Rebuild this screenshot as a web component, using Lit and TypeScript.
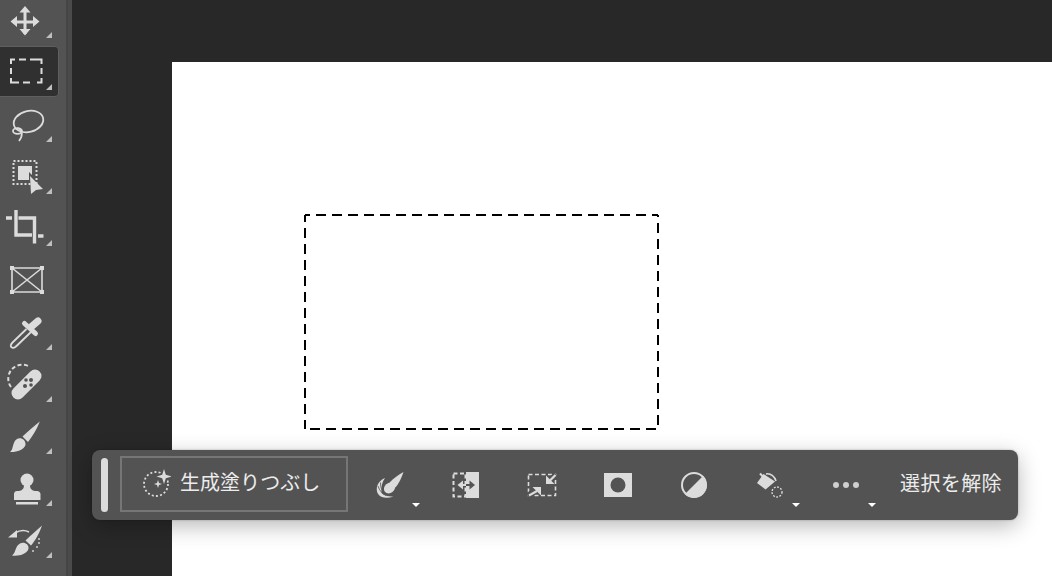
import { LitElement, html, css, svg } from "lit";
import { customElement } from "lit/decorators.js";
import { classMap } from "lit/directives/class-map.js";

const INK = "#dcdcdc";
const BAR = "#535353";

// Tool icons are drawn in page coordinates, the viewBox picks the slot
const TOOLS = [
  {
    corner: true,
    icon: svg`<path d="M25 10V34M13 22H37" stroke=${INK} stroke-width="3" fill="none"/>
      <path d="M25 6L30.500 12.500H19.500ZM25 35.500L30.500 29H19.500ZM10.500 21.500L17 16V27ZM39.500 21.500L33 16V27Z" fill=${INK}/>`,
  },
  {
    corner: true,
    selected: true,
    icon: svg`<path d="M15 59.500H11V64M19 59.500H26M30 59.500H37M41.500 64V59.500H37M41.500 68V74M41.500 78V82.500H37M30 82.500H23M19 82.500H11V78M11 74V68" stroke=${INK} stroke-width="2" fill="none"/>`,
  },
  {
    corner: true,
    icon: svg`<g fill="none" stroke=${INK} stroke-width="1.800">
      <ellipse cx="28.500" cy="121.500" rx="15" ry="10.500" transform="rotate(-14 28.500 121.500)"/>
      <ellipse cx="17.500" cy="131" rx="4.500" ry="2.800"/>
      <path d="M17 128C23 130 23 136 19 141"/></g>`,
  },
  {
    corner: true,
    icon: svg`<rect x="13.500" y="161" width="23" height="23" fill="none" stroke=${INK} stroke-width="2" stroke-dasharray="2 2"/>
      <path d="M18 166H32V175L29 172V180H18Z" fill=${INK}/>
      <path d="M30 176L43 189L36 190L31 194Z" fill=${INK}/>`,
  },
  {
    corner: true,
    icon: svg`<path d="M6 218H12M16 210V235H32M18.500 218H34.500V243.500M38 236H43.500" fill="none" stroke=${INK} stroke-width="3.400"/>`,
  },
  {
    corner: false,
    icon: svg`<path d="M12 268H42V292H12ZM12 268L42 292M42 268L12 292" fill="none" stroke=${INK} stroke-width="1.600"/>
      <path d="M10 266h4v4h-4zM40 266h4v4h-4zM10 290h4v4h-4zM40 290h4v4h-4z" fill=${INK}/>`,
  },
  {
    corner: true,
    icon: svg`<path d="M26.500 329L12.500 342.500C10 345 10.500 347 12 347.500C13.500 348.500 15 347.500 16.500 346L31 332" fill="none" stroke=${INK} stroke-width="1.800"/>
      <path d="M24.500 323.500L35.500 333.500" stroke=${INK} stroke-width="5" stroke-linecap="round"/>
      <path d="M31 327L38 321" stroke=${INK} stroke-width="7" stroke-linecap="round"/>`,
  },
  {
    corner: true,
    icon: svg`<path d="M11 387A14 14 0 0 1 30 367" fill="none" stroke=${INK} stroke-width="2" stroke-dasharray="4 2.500"/>
      <path d="M18 393L35 376" stroke=${INK} stroke-width="13" stroke-linecap="round"/>
      <g fill=${BAR}><circle cx="31" cy="380" r="2"/><circle cx="26" cy="380" r="1.800"/><circle cx="31" cy="385" r="1.800"/><circle cx="25" cy="386" r="2"/></g>`,
  },
  {
    corner: true,
    icon: svg`<path d="M39.800 421.500C37 429 32 437 28 442L22.500 436.500C28 431 35 425.500 39.800 421.500Z" fill=${INK}/>
      <path d="M10 452C14 449 12 442 17 439C21 437 26 440 25.500 445C24 450 16 452.500 10 452Z" fill=${INK}/>`,
  },
  {
    corner: true,
    icon: svg`<circle cx="27" cy="480" r="6.500" fill=${INK}/>
      <path d="M24 485H30C30 489 32 491 37 491C39 491 40.500 492.500 40.500 494V500H14V494C14 492.500 15 491 17 491C22 491 24 489 24 485Z" fill=${INK}/>
      <rect x="16" y="502" width="22" height="2.500" fill=${INK}/>`,
  },
  {
    corner: true,
    icon: svg`<path d="M42 525.500C39.500 533 35 541 31 545.500L25.500 540.500C31 535 37 530 42 525.500Z" fill=${INK}/>
      <path d="M12 555.500C16 553 15 546 20 543.500C24 541.500 29 544 28.500 548.500C27.500 554 19 556.500 12 555.500Z" fill=${INK}/>
      <path d="M8 537.500L17 530V537.500Z" fill=${INK}/>
      <path d="M15 533C20 530 25 530 29 532" fill="none" stroke=${INK} stroke-width="1.500"/>
      <g fill=${INK}><circle cx="39" cy="539" r="0.900"/><circle cx="39" cy="543" r="0.900"/><circle cx="37" cy="547" r="0.900"/><circle cx="33" cy="551" r="0.900"/></g>`,
  },
];

// Task bar icons, also in page coordinates, each in a 40px slot centred on the button
const ACTIONS = [
  {
    cx: 390,
    caret: true,
    icon: svg`<path d="M403.500 472C401.500 478 398.500 484 395.500 487.500L389.500 482.500C394 478 399 474.500 403.500 472Z" fill=${INK}/>
      <ellipse cx="389.500" cy="488" rx="6" ry="5" transform="rotate(-40 389.500 488)" fill=${INK}/>
      <path d="M385 478C377.500 481 375.500 488 377.500 493C380 498 387 499 393.500 496.500C387 496.500 383 495 381.500 492.500C381 487 382 482 385 478Z" fill=${INK}/>
      <path d="M378 486C379.500 490.500 382 494 386 495.500M380.500 482.500C380.500 486 381 488 382 490" fill="none" stroke=${BAR} stroke-width="0.800"/>`,
  },
  {
    cx: 466,
    icon: svg`<rect x="466" y="472" width="13" height="26" fill=${INK}/>
      <rect x="453.500" y="473.500" width="12" height="23" fill="none" stroke=${INK} stroke-width="2" stroke-dasharray="4 2.500"/>
      <path d="M466 485H459" stroke=${INK} stroke-width="2"/>
      <path d="M457.500 485L463 480.500V489.500Z" fill=${INK}/>
      <path d="M466 485H472" stroke=${BAR} stroke-width="2"/>
      <path d="M475 485L469.500 480.500V489.500Z" fill=${BAR}/>`,
  },
  {
    cx: 542,
    icon: svg`<rect x="528.500" y="474.500" width="27" height="21" fill="none" stroke=${INK} stroke-width="1.600" stroke-dasharray="4 2.500"/>
      <path d="M556 474.500L545 485.500M528 496L541 486" stroke=${BAR} stroke-width="6"/>
      <path d="M555.500 475L550 480.500M529 495.500L537 491" stroke=${INK} stroke-width="2.200" fill="none"/>
      <path d="M546 484V475.500L554.500 484ZM541 487H532.500L541 495.500Z" fill=${INK}/>`,
  },
  {
    cx: 618,
    icon: svg`<rect x="604" y="473" width="28" height="24" fill=${INK}/><circle cx="618" cy="485" r="7.500" fill=${BAR}/>`,
  },
  {
    cx: 694,
    icon: svg`<circle cx="694" cy="485" r="12" fill="none" stroke=${INK} stroke-width="2"/>
      <path d="M685 494L703 476A12.500 12.500 0 0 1 685 494Z" fill=${INK}/>`,
  },
  {
    cx: 770,
    caret: true,
    icon: svg`<path d="M757 483L763.500 474L775 481.500L765.500 489.500Z" fill=${INK}/>
      <path d="M760 473.500L766 480" stroke=${INK} stroke-width="2"/>
      <path d="M766 474C771 473 775 477 776 481" fill="none" stroke=${INK} stroke-width="1.500"/>
      <circle cx="777" cy="492" r="5" fill="none" stroke=${INK} stroke-width="1.400" stroke-dasharray="1.800 1.500"/>`,
  },
  {
    cx: 846,
    caret: true,
    icon: svg`<g fill="#cfcfcf"><circle cx="836" cy="485" r="3"/><circle cx="846" cy="485" r="3"/><circle cx="856" cy="485" r="3"/></g>`,
  },
];

@customElement("app-root")
export class AppRoot extends LitElement {
  static styles = css`
    :host {
      display: block;
      width: 1052px;
      height: 576px;
      overflow: hidden;
      position: relative;
      background: #282828;
      font-family: "Noto Sans CJK JP", "Noto Sans", sans-serif;
    }
    .app {
      display: flex;
      height: 100%;
    }
    .toolbar {
      flex: none;
      width: 66px;
      height: 100%;
      background: #535353;
      border-right: 2px solid #454545;
      overflow: hidden;
    }
    .tools {
      margin-top: -4px;
    }
    .edge {
      flex: none;
      width: 4px;
      background: #4a4a4a;
    }
    .tool {
      position: relative;
      width: 59px;
      height: 52px;
    }
    .tool svg {
      display: block;
      position: relative;
    }
    /* sits one step above its slot, the highlight is not centred on the slot */
    .tool.selected::before {
      content: "";
      position: absolute;
      left: -2px;
      right: 0;
      top: -2px;
      height: 51px;
      box-sizing: border-box;
      background: #303030;
      border: 1.5px solid #5f5f5f;
      border-radius: 0 4px 4px 0;
    }
    .corner {
      position: absolute;
      left: 46px;
      bottom: 10px;
      width: 6px;
      height: 6px;
      background: #c0c0c0;
      clip-path: polygon(100% 0, 100% 100%, 0 100%);
    }
    .stage {
      flex: 1;
      min-width: 0;
      padding: 62px 0 0 100px;
    }
    .doc {
      position: relative;
      height: 100%;
      background: #fff;
    }
    .marquee {
      position: absolute;
      left: 132px;
      top: 152px;
      display: block;
    }
    .taskbar {
      position: absolute;
      left: 92px;
      top: 450px;
      width: 926px;
      height: 70px;
      box-sizing: border-box;
      display: flex;
      align-items: center;
      padding: 0 16px 0 9px;
      background: #535353;
      border-radius: 8px;
      box-shadow: 0 6px 22px rgba(0, 0, 0, 0.28), 0 0 2px rgba(0, 0, 0, 0.3);
      color: #ececec;
      font-size: 20px;
      line-height: 28px;
    }
    .grip {
      flex: none;
      width: 7px;
      height: 54px;
      border-radius: 4px;
      background: #dcdcdc;
      margin-right: 12px;
    }
    .generate {
      flex: none;
      width: 228px;
      height: 56px;
      box-sizing: border-box;
      border: 2px solid #767676;
      display: flex;
      align-items: center;
      gap: 9px;
      padding: 0 0 0 19px;
      margin: -2px 4px 0 0;
      white-space: nowrap;
    }
    .generate span {
      padding-bottom: 5px;
    }
    .generate svg {
      display: block;
      flex: none;
    }
    .action {
      position: relative;
      flex: none;
      width: 76px;
      height: 40px;
      display: flex;
      justify-content: center;
    }
    .caret {
      position: absolute;
      left: 60px;
      top: 38px;
      width: 8px;
      height: 4px;
      background: #fff;
      clip-path: polygon(0 0, 100% 0, 50% 100%);
    }
    .clear {
      margin-left: auto;
      white-space: nowrap;
      letter-spacing: 0.4px;
      padding-bottom: 5px;
    }
  `;

  render() {
    return html`
      <div class="app">
        <div class="toolbar">
          <div class="tools">
            ${TOOLS.map(
              (t, i) => html`
                <div class=${classMap({ tool: true, selected: !!t.selected })}>
                  <svg width="59" height="52" viewBox="0 ${i * 52 - 4} 59 52">${t.icon}</svg>
                  ${t.corner ? html`<span class="corner"></span>` : ""}
                </div>
              `
            )}
          </div>
        </div>
        <div class="edge"></div>
        <div class="stage">
          <div class="doc">
            <svg class="marquee" width="356" height="218" viewBox="0 0 356 218" fill="none" stroke="#000" stroke-width="2" stroke-dasharray="10 6">
              <path d="M1 1H354" stroke-dashoffset="5"/>
              <path d="M1 1V215" stroke-dashoffset="3"/>
              <path d="M354 1V215" stroke-dashoffset="8"/>
              <path d="M1 215H354" stroke-dashoffset="11"/>
            </svg>
          </div>
        </div>
      </div>
      <div class="taskbar">
        <div class="grip"></div>
        <div class="generate">
          <svg width="30" height="30" viewBox="141 468 30 30">
            <circle cx="156" cy="483" r="12" fill="none" stroke=${INK} stroke-width="1.800" stroke-dasharray="2 2.200"/>
            <path d="M164 467L166 473.500L172 475.500L166 477.500L164 484L162 477.500L156 475.500L162 473.500Z" fill=${BAR} stroke=${BAR} stroke-width="3"/>
            <path d="M164 468L165.800 473.700L171.500 475.500L165.800 477.300L164 483L162.200 477.300L156.500 475.500L162.200 473.700Z" fill=${INK}/>
            <path d="M158 479L159 482L162 483L159 484L158 487L157 484L154 483L157 482Z" fill=${INK}/>
          </svg>
          <span>生成塗りつぶし</span>
        </div>
        ${ACTIONS.map(
          (a) => html`
            <div class="action">
              <svg width="40" height="40" viewBox="${a.cx - 20} 465 40 40">${a.icon}</svg>
              ${a.caret ? html`<span class="caret"></span>` : ""}
            </div>
          `
        )}
        <div class="clear">選択を解除</div>
      </div>
    `;
  }
}
